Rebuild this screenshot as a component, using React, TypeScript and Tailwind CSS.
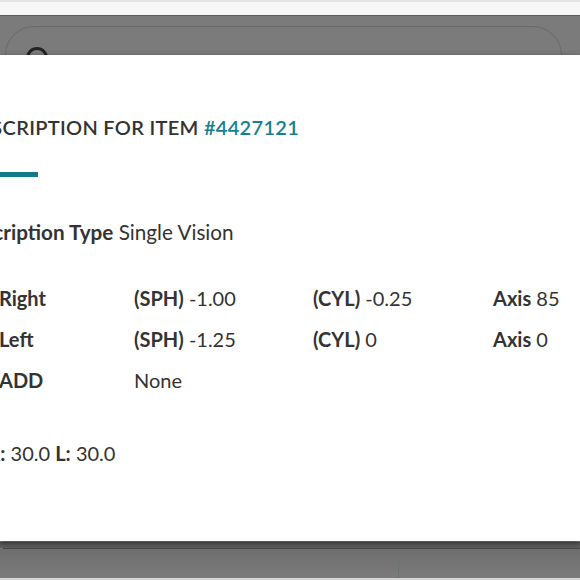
export default function App() {
  const rows = [
    { label: "Right", sph: "-1.00", cyl: "-0.25", axis: "85" },
    { label: "Left", sph: "-1.25", cyl: "0", axis: "0" },
  ];

  return (
    <div
      className="relative h-[580px] w-[580px] overflow-hidden bg-[#7b7b7b] text-[#333]"
      style={{ fontFamily: "Lato, 'Open Sans', sans-serif" }}
    >
      {/* page behind the overlay */}
      <div className="flex h-full flex-col">
        <div className="h-[2px] bg-[#e3e3e3]" />
        <div className="h-[13px] bg-[#f7f7f7]" />
        <div className="h-[1px] bg-[#5d5d5d]" />
        <div className="flex flex-1 flex-col justify-between">
          <div className="ml-[5px] mt-[10px] flex h-[58px] w-[557px] items-start rounded-[29px] border border-[#6a6a6a] pl-[20px] pt-[20px]">
            <div className="h-[22px] w-[22px] rounded-full border-[3px] border-[#222]" />
          </div>
          <div>
            <div className="h-[6px] bg-gradient-to-b from-[#555] to-[#5f5f5f]" />
            <div className="ml-[3px] h-[1px] bg-[#474747]" />
            <div className="flex h-[29px] bg-gradient-to-b from-[#6e6e6e] to-[#7b7b7b]">
              <div className="w-[399px] border-r border-[#6c7171]" />
            </div>
            <div className="h-[2px] bg-[#d6d6d6]" />
          </div>
        </div>
      </div>

      {/* modal */}
      <div className="absolute left-0 right-0 top-[55px] h-[486px] bg-white shadow-[0_2px_6px_rgba(0,0,0,0.45)]">
        <div className="-ml-[45px] pt-[60px] text-[20px] leading-[24px] whitespace-nowrap">
          <h2 className="-ml-[1px] font-semibold uppercase tracking-[0.3px]">
            Prescription for item <span className="text-[#17808f]">#4427121</span>
          </h2>
          <div className="mt-[33px] h-[5px] w-[83px] bg-[#10798a]" />

          <p className="-ml-[2px] mt-[43px] text-[20.7px]">
            <span className="font-bold">Prescription Type</span> Single Vision
          </p>

          <div className="mt-[42px] flex flex-col gap-[17px]">
            {rows.map((r) => (
              <div key={r.label} className="grid grid-cols-[179px_179px_180px_140px]">
                <span className="pl-[44px] font-bold">{r.label}</span>
                <span>
                  <span className="font-bold">(SPH)</span> {r.sph}
                </span>
                <span>
                  <span className="font-bold">(CYL)</span> {r.cyl}
                </span>
                <span>
                  <span className="font-bold">Axis</span> {r.axis}
                </span>
              </div>
            ))}
            <div className="grid grid-cols-[179px_179px_180px_140px]">
              <span className="pl-[44px] font-bold">ADD</span>
              <span>None</span>
            </div>
          </div>

          <p className="mt-[49px]">
            <span className="font-bold">PD R:</span> 30.0 <span className="font-bold">L:</span> 30.0
          </p>
        </div>
      </div>
    </div>
  );
}
